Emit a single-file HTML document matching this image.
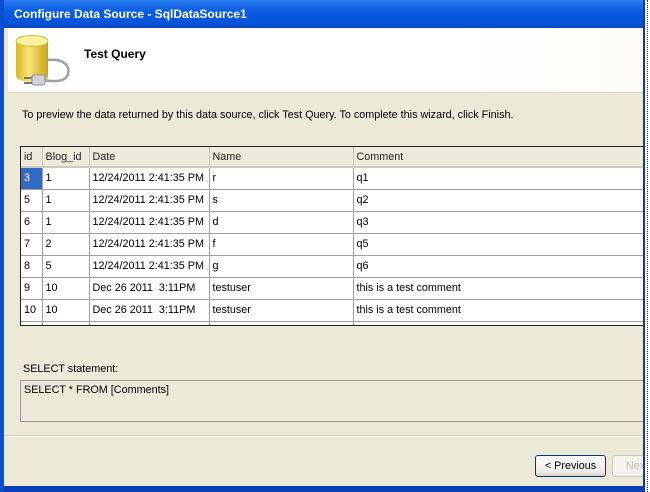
<!DOCTYPE html>
<html><head><style>
*{margin:0;padding:0;box-sizing:border-box}
body{width:650px;height:492px;background:#fff;position:relative;overflow:hidden;font-family:"Liberation Sans",sans-serif;font-size:10.8px;color:#000}
.win{position:absolute;left:0;top:0;width:645px;height:492px;background:#ECE9D8;border-left:4px solid #0B4FD0;border-right:2px solid #0A3BA8;overflow:hidden}
.title{position:absolute;left:0;top:0;width:645px;height:28px;background:linear-gradient(#2D7EF2,#0A5CE0 40%,#0654DA 80%,#0A48C0);color:#fff;font-weight:bold;font-size:12px;padding:7px 0 0 10px}
.hdr{position:absolute;left:4px;top:28px;width:639px;height:65px;background:linear-gradient(90deg,#fff 70%,#fdfcf7);border-bottom:1px solid #d8d4c4}
.dots{position:absolute;left:647px;top:0;height:492px;border-left:1px dotted #334}
.t{position:absolute;white-space:nowrap}
.grid{position:absolute;left:16px;top:146px;width:640px;height:180px;border:1px solid #222;background:#ECE9D8;overflow:hidden}
table{border-collapse:collapse;position:absolute;left:0;top:0;table-layout:fixed;width:640px}
td{height:22px;border-right:1px solid #a0a0a0;border-bottom:1px solid #a0a0a0;background:#fff;padding:0 0 0 3px;vertical-align:middle;white-space:nowrap;overflow:hidden}
tr.h td{height:20px;background:#EBEADB;border-right:1px solid #c8c5b5;border-bottom:2px solid #cfcbbc;color:#222}
.sel{background:#316AC5!important;color:#fff}
.box{position:absolute;left:16px;top:380px;width:640px;height:42px;border:1px solid #9a9a9a;padding:3px 0 0 3px}
.btn{position:absolute;top:455px;height:22px;border:1px solid #003C74;border-radius:3px;background:linear-gradient(#fff,#ECEBE6 80%,#d6d0c5);text-align:center;line-height:20px}
</style></head><body>
<div class="win">
<div class="title">Configure Data Source - SqlDataSource1</div>
<div class="hdr">
<svg style="position:absolute;left:4px;top:6px" width="64" height="56" viewBox="0 0 64 56">
<defs><linearGradient id="g" x1="0" x2="1"><stop offset="0" stop-color="#d8b620"/><stop offset=".4" stop-color="#f6e47a"/><stop offset="1" stop-color="#c9a313"/></linearGradient></defs>
<path d="M4 7 V42 A16 6 0 0 0 36 42 V7 Z" fill="url(#g)"/>
<ellipse cx="20" cy="7" rx="16" ry="5.5" fill="#faf0a0" stroke="#d6bb3a"/>
<path d="M36 26 C54 24 58 34 56 40 C54 48 42 48 32 46" fill="none" stroke="#9aa0a8" stroke-width="2.5"/>
<rect x="20" y="41" width="13" height="10" rx="2" fill="#cfd3d8" stroke="#8a9098"/>
<path d="M12 44 H20 M12 49 H20" stroke="#777" stroke-width="2"/>
</svg>
<div class="t" style="left:76px;top:19px;font-weight:bold;font-size:12px">Test Query</div>
</div>
<div class="t" style="left:18px;top:109px">To preview the data returned by this data source, click Test Query. To complete this wizard, click Finish.</div>
<div class="grid"><table>
<colgroup><col style="width:21px"><col style="width:47px"><col style="width:120px"><col style="width:144px"><col></colgroup>
<tr class="h"><td>id</td><td>Blog_id</td><td>Date</td><td>Name</td><td>Comment</td></tr>
<tr><td class="sel">3</td><td>1</td><td>12/24/2011 2:41:35 PM</td><td>r</td><td>q1</td></tr>
<tr><td>5</td><td>1</td><td>12/24/2011 2:41:35 PM</td><td>s</td><td>q2</td></tr>
<tr><td>6</td><td>1</td><td>12/24/2011 2:41:35 PM</td><td>d</td><td>q3</td></tr>
<tr><td>7</td><td>2</td><td>12/24/2011 2:41:35 PM</td><td>f</td><td>q5</td></tr>
<tr><td>8</td><td>5</td><td>12/24/2011 2:41:35 PM</td><td>g</td><td>q6</td></tr>
<tr><td>9</td><td>10</td><td>Dec 26 2011&nbsp; 3:11PM</td><td>testuser</td><td>this is a test comment</td></tr>
<tr><td>10</td><td>10</td><td>Dec 26 2011&nbsp; 3:11PM</td><td>testuser</td><td>this is a test comment</td></tr>
<tr><td></td><td></td><td></td><td></td><td></td></tr>
</table></div>
<div class="t" style="left:19px;top:363px">SELECT statement:</div>
<div class="box">SELECT * FROM [Comments]</div>
<div style="position:absolute;left:0;top:435px;width:639px;border-top:1px solid #d0ccbc;border-bottom:1px solid #fff"></div>
<div class="btn" style="left:531px;width:71px">&lt; Previous</div>
<div class="btn" style="left:608px;width:40px;border-color:#c9c7ba;color:#c0bdb0;background:#F4F3EE;text-align:left;padding-left:13px">Next</div>
<div style="position:absolute;left:-4px;top:486px;width:650px;height:6px;background:#0A3FB8"></div>
</div>
<div class="dots"></div>
</body></html>
